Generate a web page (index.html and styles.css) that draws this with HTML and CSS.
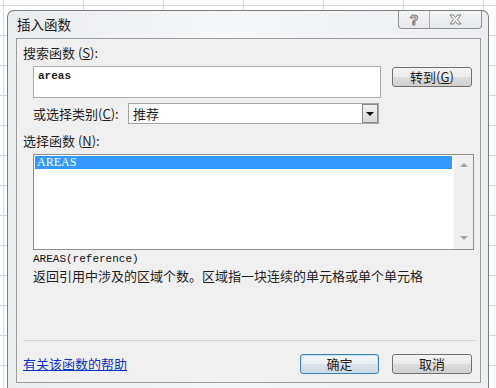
FILE: index.html
```html
<!DOCTYPE html>
<html lang="zh-CN">
<head>
    <meta charset="UTF-8">
    <title>插入函数</title>
    <link rel="stylesheet" href="styles.css">
</head>
<body>
    <div class="window">
        <div class="titlebar">
            <span class="title">插入函数</span>
            <div class="caption">
                <span class="cap help">?</span>
                <span class="cap close">
                    <svg width="13" height="11" viewBox="0 0 13 11">
                        <polygon points="1,1 4.5,1 6.5,3.6 8.5,1 12,1 8.3,5.5 12,10 8.5,10 6.5,7.4 4.5,10 1,10 4.7,5.5" fill="#fff" stroke="#7a7a7a" stroke-width="1"/>
                    </svg>
                </span>
            </div>
        </div>
        <div class="panel">
            <div class="label first">搜索函数 (<u>S</u>):</div>
            <div class="search-row">
                <div class="search-box">areas</div>
                <button class="btn go">转到(<u>G</u>)</button>
            </div>
            <div class="cat-row">
                <span class="cat-label">或选择类别(<u>C</u>):</span>
                <div class="select">
                    <span class="select-text">推荐</span>
                    <span class="drop"><span class="tri-down"></span></span>
                </div>
            </div>
            <div class="label fn-label">选择函数 (<u>N</u>):</div>
            <div class="listbox">
                <div class="list-items">
                    <div class="item selected">AREAS</div>
                </div>
                <div class="scrollbar">
                    <span class="arrow up"></span>
                    <span class="arrow down"></span>
                </div>
            </div>
            <div class="syntax">AREAS(reference)</div>
            <div class="desc">返回引用中涉及的区域个数。区域指一块连续的单元格或单个单元格</div>
            <div class="separator"></div>
            <div class="footer">
                <a class="help-link" href="#">有关该函数的帮助</a>
                <div class="footer-btns">
                    <button class="btn default">确定</button>
                    <button class="btn cancel">取消</button>
                </div>
            </div>
        </div>
    </div>
</body>
</html>
```

FILE: styles.css
```css
html, body {
    margin: 0;
    height: 100%;
    overflow: hidden;
}
body {
    background-color: #fff;
    background-image:
        linear-gradient(to right, #d9dadb 1px, transparent 1px),
        linear-gradient(to bottom, #d9dadb 1px, transparent 1px);
    background-size: 80px 100%, 100% 30px;
    background-position: 3px 0, 0 5px;
    font-family: "Noto Sans CJK SC", "Noto Sans", sans-serif;
    font-size: 13px;
    color: #1e1e1e;
}
.window {
    margin: 10px 0 0 7px;
    width: 482px;
    height: 378px;
    box-sizing: border-box;
    border: 1px solid #7d7d7d;
    border-bottom: none;
    border-radius: 7px 7px 0 0;
    background: linear-gradient(to right, #e9ecef, #f6f7f9 45%, #eceef1);
}
.titlebar {
    display: flex;
    justify-content: space-between;
    align-items: flex-start;
    height: 27px;
    padding: 0 6px 0 9px;
}
.title {
    padding-top: 5px;
    line-height: 16px;
    font-size: 13.5px;
    color: #1a1a1a;
}
.caption {
    display: flex;
    height: 17px;
    border: 1px solid #8f8f8f;
    border-top: none;
    border-radius: 0 0 4px 4px;
    background: linear-gradient(#f4f5f7, #e6e8eb);
}
.cap {
    display: flex;
    align-items: center;
    justify-content: center;
}
.help {
    width: 30px;
    border-right: 1px solid #a9a9a9;
    font-family: "Liberation Sans", sans-serif;
    font-weight: bold;
    font-size: 14px;
    color: #fff;
    -webkit-text-stroke: 1px #7a7a7a;
}
.close {
    width: 51px;
}
.panel {
    margin-left: 8px;
    width: 465px;
    height: 345px;
    box-sizing: border-box;
    border: 1px solid #9c9c9c;
    background: #f0f0f0;
    padding: 0 4px 0 6px;
}
.label {
    line-height: 16px;
}
.label.first {
    margin-top: 6px;
}
.search-row {
    display: flex;
    align-items: flex-start;
    margin-top: 5px;
    padding-left: 10px;
}
.search-box {
    width: 348px;
    height: 32px;
    box-sizing: border-box;
    border: 1px solid #abadb3;
    background: #fff;
    padding: 2px 4px;
    font-family: "Liberation Mono", monospace;
    font-size: 11px;
    font-weight: bold;
    line-height: 14px;
    color: #222;
}
.btn {
    box-sizing: border-box;
    height: 20px;
    padding: 0;
    border: 1px solid #707070;
    border-radius: 3px;
    background: linear-gradient(#f3f3f3 0%, #ebebeb 48%, #dddddd 52%, #cfcfcf 100%);
    font-family: "Noto Sans CJK SC", "Noto Sans", sans-serif;
    font-size: 13px;
    line-height: 16px;
    color: #1e1e1e;
}
.go {
    width: 80px;
    margin: 1px 0 0 11px;
}
.cat-row {
    display: flex;
    align-items: center;
    height: 21px;
    margin-top: 5px;
    padding-left: 10px;
}
.cat-label {
    width: 95px;
    line-height: 16px;
}
.select {
    display: flex;
    justify-content: space-between;
    width: 251px;
    height: 21px;
    box-sizing: border-box;
    border: 1px solid #a5a5a5;
    background: #fff;
}
.select-text {
    padding-left: 4px;
    line-height: 19px;
}
.drop {
    display: flex;
    align-items: center;
    justify-content: center;
    width: 16px;
    box-sizing: border-box;
    border: 1px solid #8a8a8a;
    background: linear-gradient(#f2f2f2, #d9d9d9);
}
.tri-down {
    width: 0;
    height: 0;
    border-left: 4px solid transparent;
    border-right: 4px solid transparent;
    border-top: 4px solid #111;
}
.fn-label {
    margin-top: 9px;
}
.listbox {
    display: flex;
    margin: 5px 0 0 10px;
    width: 441px;
    height: 96px;
    box-sizing: border-box;
    border: 1px solid #8e8f8f;
    background: #fff;
}
.list-items {
    flex: 1;
    padding: 1px;
}
.item {
    height: 13px;
    line-height: 13px;
    padding-left: 2px;
    font-family: "Liberation Serif", serif;
    font-size: 12px;
}
.item.selected {
    background: #3399ff;
    color: #fff;
}
.scrollbar {
    display: flex;
    flex-direction: column;
    justify-content: space-between;
    align-items: center;
    width: 20px;
    padding: 8px 0 9px;
    box-sizing: border-box;
    background: #efefef;
    border-left: 1px solid #f8f8f8;
}
.arrow {
    width: 0;
    height: 0;
    border-left: 4px solid transparent;
    border-right: 4px solid transparent;
}
.arrow.up {
    border-bottom: 4px solid #a2a2a2;
}
.arrow.down {
    border-top: 4px solid #a2a2a2;
}
.syntax {
    margin-top: 2px;
    padding-left: 10px;
    line-height: 14px;
    font-family: "Liberation Mono", monospace;
    font-size: 11px;
    color: #111;
}
.desc {
    margin-top: 2px;
    padding-left: 10px;
    line-height: 16px;
}
.separator {
    margin-top: 56px;
    height: 1px;
    background: #d6d6d6;
}
.footer {
    display: flex;
    justify-content: space-between;
    align-items: center;
    margin-top: 13px;
    padding-right: 4px;
    height: 20px;
}
.help-link {
    color: #0b34c4;
    text-decoration: underline;
    line-height: 16px;
}
.footer-btns {
    display: flex;
    gap: 13px;
}
.default {
    width: 79px;
    border-color: #3c7fb1;
    box-shadow: inset 0 0 0 1px #c5e4f7;
    background: linear-gradient(#f2f6f9 0%, #e9eff3 48%, #dbe3ea 52%, #ced8e0 100%);
}
.cancel {
    width: 80px;
}
```
